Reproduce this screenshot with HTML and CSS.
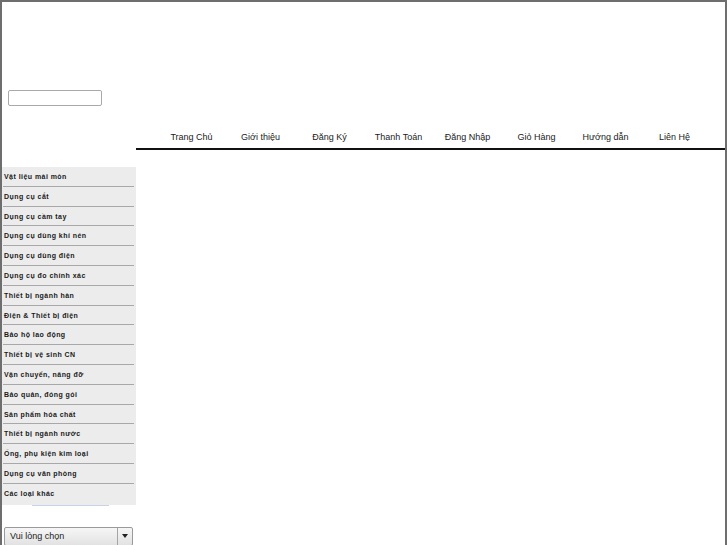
FILE: index.html
```html
<!DOCTYPE html>
<html lang="vi">

<head>
    <meta charset="UTF-8">
    <meta name="viewport" content="width=device-width, initial-scale=1.0">
    <title>Cửa hàng</title>
    <link rel="stylesheet" href="styles.css">
</head>

<body>
    <div class="page">
        <header class="top">
            <input type="text" class="search" name="" id="search">
        </header>
        <div class="menu-row">
            <div class="menu-spacer"></div>
            <nav class="menu">
                <a href="#">Trang Chủ</a>
                <a href="#">Giới thiệu</a>
                <a href="#">Đăng Ký</a>
                <a href="#">Thanh Toán</a>
                <a href="#">Đăng Nhập</a>
                <a href="#">Giỏ Hàng</a>
                <a href="#">Hướng dẫn</a>
                <a href="#">Liên Hệ</a>
            </nav>
        </div>
        <section class="main">
            <aside class="side">
                <ul class="cats"> <!-- Categories -->
                    <li><a href="#">Vật liệu mài mòn</a></li>
                    <li><a href="#">Dụng cụ cắt</a></li>
                    <li><a href="#">Dụng cụ cầm tay</a></li>
                    <li><a href="#">Dụng cụ dùng khí nén</a></li>
                    <li><a href="#">Dụng cụ dùng điện</a></li>
                    <li><a href="#">Dụng cụ đo chính xác</a></li>
                    <li><a href="#">Thiết bị ngành hàn</a></li>
                    <li><a href="#">Điện &amp; Thiết bị điện</a></li>
                    <li><a href="#">Bảo hộ lao động</a></li>
                    <li><a href="#">Thiết bị vệ sinh CN</a></li>
                    <li><a href="#">Vận chuyển, nâng đỡ</a></li>
                    <li><a href="#">Bảo quản, đóng gói</a></li>
                    <li><a href="#">Sản phẩm hóa chất</a></li>
                    <li><a href="#">Thiết bị ngành nước</a></li>
                    <li><a href="#">Ống, phụ kiện kim loại</a></li>
                    <li><a href="#">Dụng cụ văn phòng</a></li>
                    <li class="last"><a href="#">Các loại khác</a></li>
                </ul>
                <div class="side-foot"></div>
                <div class="pick"> <!-- Select box -->
                    <span class="pick-text">Vui lòng chọn</span>
                    <span class="pick-arrow"></span>
                </div>
            </aside>
            <div class="content"></div>
        </section>
    </div>
</body>

</html>
```

FILE: styles.css
```css
body {
    margin: 0;
    padding: 0;
    font-family: "Liberation Sans", Arial, sans-serif;
    background-color: #fff;
}

* {
    box-sizing: border-box;
}

a {
    text-decoration: none;
    color: #111;
}

.page {
    border: 2px solid #6e6e6e;
    border-bottom: 0;
    min-height: 545px;
}

/* Header */
.top {
    height: 125px;
    padding: 88px 0 0 6px;
}

.search {
    width: 94px;
    height: 16px;
    border: 1px solid #a9a9a9;
    border-radius: 2px;
    padding: 0;
    margin: 0;
    display: block;
}

/* Top menu */
.menu-row {
    display: flex;
}

.menu-spacer {
    width: 134px;
}

.menu {
    flex: 1;
    display: flex;
    height: 23px;
    padding-left: 21px;
    border-bottom: 2px solid #111;
}

.menu a {
    width: 69px;
    text-align: center;
    font-size: 9px;
    line-height: 21px;
    color: #222;
}

/* Left column */
.main {
    display: flex;
}

.side {
    width: 134px;
    margin-top: 17px;
}

.cats {
    list-style: none;
    margin: 0;
    padding: 0 2px 0 0;
    background-color: #ececec;
}

.cats li {
    height: 19.8px;
    border-bottom: 1px solid #a8a8a8;
    margin-left: 1px;
}

.cats li.last {
    border-bottom: 0;
    height: 21px;
}

.cats a {
    display: block;
    font-size: 7px;
    font-weight: bold;
    letter-spacing: 0.45px;
    line-height: 20px;
    padding-left: 1px;
    color: #1a1a1a;
}

.side-foot {
    height: 1px;
    width: 77px;
    margin-left: 30px;
    background-color: #c6d2e6;
}

.pick {
    margin: 21px 0 0 2px;
    width: 129px;
    height: 19px;
    border: 1px solid #9a9a9a;
    border-radius: 2px;
    background: linear-gradient(#f6f6f6, #e2e2e2);
    display: flex;
    align-items: center;
}

.pick-text {
    flex: 1;
    font-size: 9px;
    padding-left: 5px;
    color: #222;
}

.pick-arrow {
    width: 15px;
    height: 100%;
    border-left: 1px solid #a5a5a5;
    display: flex;
    align-items: center;
    justify-content: center;
}

.pick-arrow::after {
    content: "";
    border-left: 3px solid transparent;
    border-right: 3px solid transparent;
    border-top: 4px solid #222;
}

.content {
    flex: 1;
}
```
